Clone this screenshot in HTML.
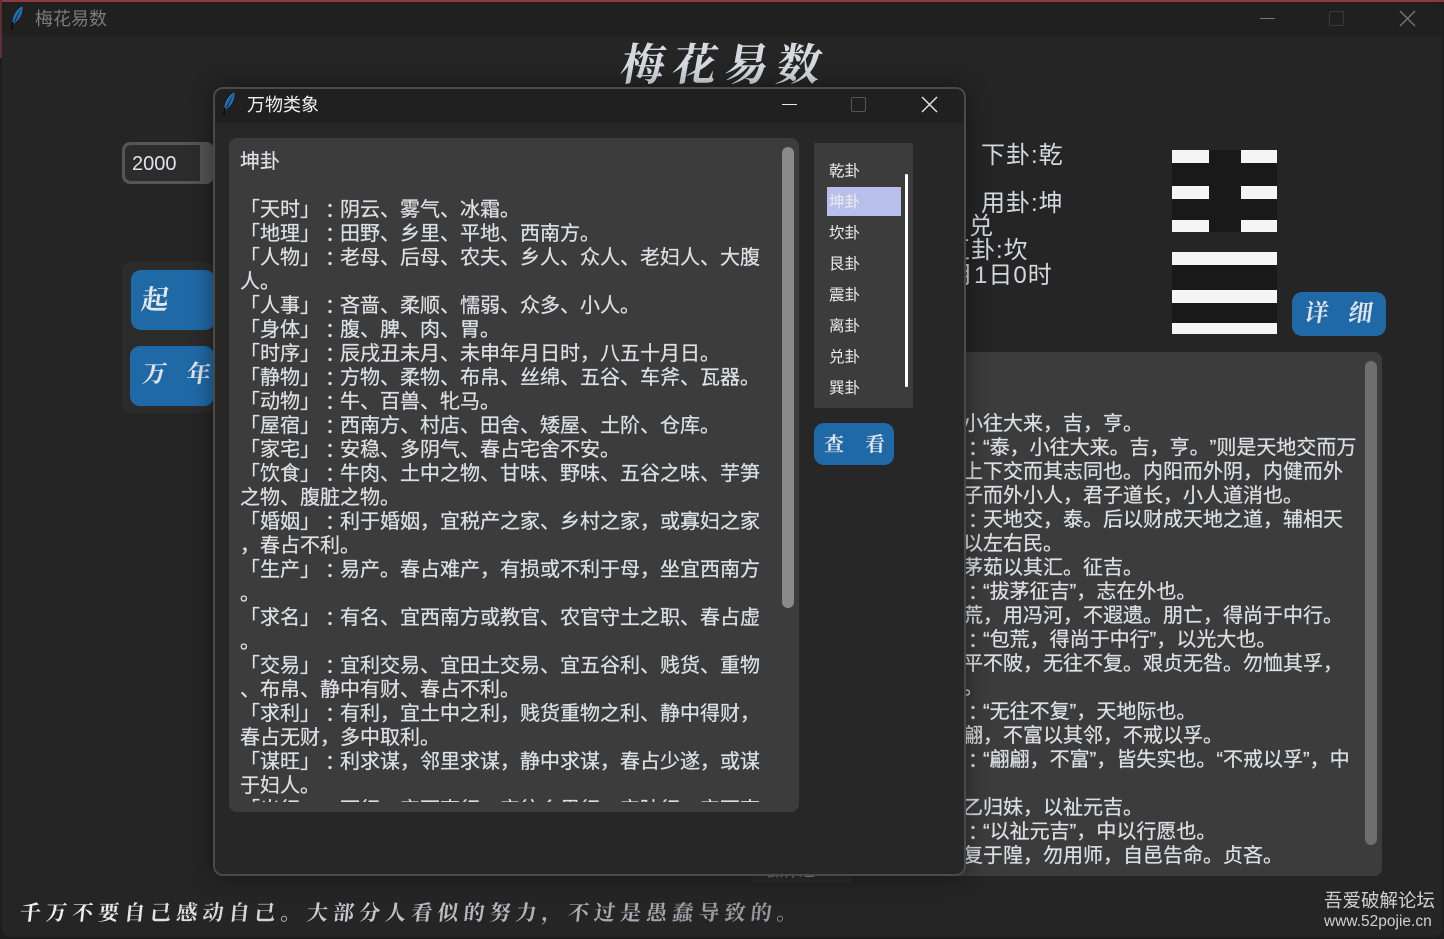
<!DOCTYPE html>
<html lang="zh-CN"><head><meta charset="utf-8"><title>梅花易数</title>
<style>
html,body{margin:0;padding:0;background:#1d1d1d;}
body{width:1444px;height:939px;overflow:hidden;position:relative;font-family:"Liberation Sans","Noto Sans CJK SC",sans-serif;text-spacing-trim:space-all;font-feature-settings:normal;}
div,pre,svg{position:absolute;box-sizing:border-box;margin:0;}
.t{font-family:"Liberation Sans","Noto Sans CJK SC",sans-serif;font-size:20px;line-height:24px;color:#dcdfe3;white-space:pre;text-spacing-trim:space-all;-webkit-text-stroke:.25px #dcdfe3;}
.t i{font-style:normal;font-family:"Noto Sans CJK JP",sans-serif;display:inline-block;width:20px;height:24px;line-height:24px;vertical-align:top;}
.cal{font-family:"Noto Serif CJK SC",serif;font-weight:700;white-space:nowrap;}
.btn{background:#1f69a7;border-radius:10px;}
.lab{font-size:24px;line-height:28px;letter-spacing:1px;color:#d5d9de;white-space:nowrap;font-family:"Liberation Sans","Noto Sans CJK SC",sans-serif;}
.bar{background:#f5f5f5;height:13px;}
.li{left:829px;font-size:15.5px;line-height:20px;color:#ececec;white-space:nowrap;}
</style></head><body>
<div style="left:0;top:0;width:1444px;height:939px;background:#1d1d1d"></div>
<div style="left:0;top:0;width:1444px;height:2px;background:#8a3a42"></div>
<div style="left:0;top:0;width:2px;height:58px;background:#5e3034"></div>
<div style="left:2px;top:2px;width:1440px;height:935px;background:#252525;border-radius:8px;overflow:hidden"></div>
<div style="left:2px;top:2px;width:1440px;height:35px;background:#202020;border-radius:8px 8px 0 0"></div>
<svg style="left:9px;top:5px" width="16" height="26" viewBox="0 0 16 26"><path d="M13 2C8 5 4 11 4 18L3 24M13 2C13 9 10 15 4 18" fill="#1f69b0" stroke="#2a7cc4" stroke-width="1"/><path d="M3 24L4 17" stroke="#0c0c0c" stroke-width="2"/></svg>
<div style="left:35px;top:6px;font-size:18px;line-height:26px;color:#7b7b7b">梅花易数</div>
<div style="left:1260px;top:18px;width:15px;height:1px;background:#777"></div>
<div style="left:1329px;top:11px;width:15px;height:15px;border:1px solid #3a3a3a;border-radius:2px"></div>
<svg style="left:1399px;top:10px" width="17" height="17" viewBox="0 0 17 17"><path d="M1 1L16 16M16 1L1 16" stroke="#777" stroke-width="1.3" fill="none"/></svg>

<div class="cal" style="left:622px;top:31px;font-size:44px;line-height:60px;letter-spacing:8px;color:#d5dae0;transform:skewX(-10deg)">梅花易数</div>

<div style="left:122px;top:142px;width:92px;height:42px;background:#555;border-radius:8px"></div>
<div style="left:125px;top:145px;width:75px;height:36px;background:#2c2c2c;border-radius:6px 0 0 6px"></div>
<div style="left:132px;top:151px;font-size:20px;line-height:26px;color:#dfe3e8">2000</div>

<div style="left:122px;top:262px;width:92px;height:151px;background:#2b2b2b;border-radius:8px"></div>
<div class="btn" style="left:131px;top:270px;width:84px;height:60px"></div>
<div class="btn" style="left:130px;top:346px;width:84px;height:60px"></div>
<div class="cal" style="left:142px;top:280px;font-size:27px;line-height:36px;color:#e4e8ec;transform:skewX(-8deg)">起</div>
<div class="cal" style="left:143px;top:355px;font-size:24px;line-height:34px;color:#e0e4e8;letter-spacing:20px;transform:skewX(-8deg)">万年</div>

<div class="lab" style="left:981px;top:142px">下卦:乾</div>
<div class="lab" style="left:981px;top:190px">用卦:坤</div>
<div class="lab" style="left:969px;top:213px">兑</div>
<div class="lab" style="left:946px;top:237px">互卦:坎</div>
<div class="lab" style="left:949px;top:262px">月1日0时</div>

<div style="left:1172px;top:150px;width:105px;height:82px;background:#191919"></div>
<div style="left:1172px;top:252px;width:105px;height:82px;background:#191919"></div>
<div class="bar" style="left:1172px;top:150px;width:37px"></div>
<div class="bar" style="left:1241px;top:150px;width:36px"></div>
<div class="bar" style="left:1172px;top:186px;width:37px"></div>
<div class="bar" style="left:1241px;top:186px;width:36px"></div>
<div class="bar" style="left:1172px;top:220px;width:37px;height:12px"></div>
<div class="bar" style="left:1241px;top:220px;width:36px;height:12px"></div>
<div class="bar" style="left:1172px;top:252px;width:105px"></div>
<div class="bar" style="left:1172px;top:290px;width:105px"></div>
<div class="bar" style="left:1172px;top:323px;width:105px;height:11px"></div>

<div class="btn" style="left:1292px;top:292px;width:94px;height:44px"></div>
<div class="cal" style="left:1305px;top:295px;font-size:24px;line-height:32px;color:#dfe4e9;letter-spacing:20px;transform:skewX(-8deg)">详细</div>

<div style="left:940px;top:352px;width:442px;height:524px;background:#3c3c3c;border-radius:8px;overflow:hidden"></div>
<div style="left:1365px;top:361px;width:12px;height:484px;background:#6e6e6e;border-radius:6px"></div>
<pre class="t" style="left:963px;top:412px">小往大来，吉，亨。
<i>：</i>“泰，小往大来。吉，亨。”则是天地交而万
上下交而其志同也。内阳而外阴，内健而外
子而外小人，君子道长，小人道消也。
<i>：</i>天地交，泰。后以财成天地之道，辅相天
以左右民。
茅茹以其汇。征吉。
<i>：</i>“拔茅征吉”，志在外也。
荒，用冯河，不遐遗。朋亡，得尚于中行。
<i>：</i>“包荒，得尚于中行”，以光大也。
平不陂，无往不复。艰贞无咎。勿恤其孚，
。
<i>：</i>“无往不复”，天地际也。
翩，不富以其邻，不戒以孚。
<i>：</i>“翩翩，不富”，皆失实也。“不戒以孚”，中

乙归妹，以祉元吉。
<i>：</i>“以祉元吉”，中以行愿也。
复于隍，勿用师，自邑告命。贞吝。</pre>

<div style="left:752px;top:870px;width:99px;height:13px;background:#2b2b2b"></div>
<div style="left:767px;top:864px;font-size:16px;line-height:16px;color:#8a8a8a">操作速</div>

<!-- dialog -->
<div style="left:213px;top:87px;width:753px;height:789px;background:#272727;border:2px solid #4a4a4a;border-radius:10px;box-shadow:0 0 24px rgba(0,0,0,.45)"></div>
<div style="left:215px;top:89px;width:749px;height:34px;background:#202020;border-radius:8px 8px 0 0"></div>
<svg style="left:221px;top:91px" width="16" height="26" viewBox="0 0 16 26"><path d="M13 2C8 5 4 11 4 18L3 24M13 2C13 9 10 15 4 18" fill="#1f69b0" stroke="#2a7cc4" stroke-width="1"/><path d="M3 24L4 17" stroke="#0c0c0c" stroke-width="2"/></svg>
<div style="left:247px;top:92px;font-size:18px;line-height:26px;color:#f0f0f0">万物类象</div>
<div style="left:782px;top:104px;width:15px;height:1px;background:#e8e8e8"></div>
<div style="left:851px;top:97px;width:15px;height:15px;border:1px solid #555;border-radius:2px"></div>
<svg style="left:921px;top:96px" width="17" height="17" viewBox="0 0 17 17"><path d="M1 1L16 16M16 1L1 16" stroke="#eee" stroke-width="1.3" fill="none"/></svg>

<div style="left:229px;top:138px;width:570px;height:674px;background:#3c3c3c;border-radius:8px"></div>
<div style="left:229px;top:138px;width:553px;height:664px;overflow:hidden">
<pre class="t" style="left:11px;top:12px">坤卦

「天时」<i>：</i>阴云、雾气、冰霜。
「地理」<i>：</i>田野、乡里、平地、西南方。
「人物」<i>：</i>老母、后母、农夫、乡人、众人、老妇人、大腹
人。
「人事」<i>：</i>吝啬、柔顺、懦弱、众多、小人。
「身体」<i>：</i>腹、脾、肉、胃。
「时序」<i>：</i>辰戌丑未月、未申年月日时，八五十月日。
「静物」<i>：</i>方物、柔物、布帛、丝绵、五谷、车斧、瓦器。
「动物」<i>：</i>牛、百兽、牝马。
「屋宿」<i>：</i>西南方、村店、田舍、矮屋、土阶、仓库。
「家宅」<i>：</i>安稳、多阴气、春占宅舍不安。
「饮食」<i>：</i>牛肉、土中之物、甘味、野味、五谷之味、芋笋
之物、腹脏之物。
「婚姻」<i>：</i>利于婚姻，宜税产之家、乡村之家，或寡妇之家
，春占不利。
「生产」<i>：</i>易产。春占难产，有损或不利于母，坐宜西南方
。
「求名」<i>：</i>有名、宜西南方或教官、农官守土之职、春占虚
。
「交易」<i>：</i>宜利交易、宜田土交易、宜五谷利、贱货、重物
、布帛、静中有财、春占不利。
「求利」<i>：</i>有利，宜土中之利，贱货重物之利、静中得财，
春占无财，多中取利。
「谋旺」<i>：</i>利求谋，邻里求谋，静中求谋，春占少遂，或谋
于妇人。
「出行」<i>：</i>可行，宜西南行、宜往乡里行、宜陆行、宜西南</pre>
</div>
<div style="left:782px;top:147px;width:12px;height:461px;background:#8a8a8a;border-radius:6px"></div>

<div style="left:814px;top:143px;width:99px;height:265px;background:#3c3c3c"></div>
<div style="left:827px;top:187px;width:74px;height:29px;background:#b8bfea"></div>
<div style="left:905px;top:174px;width:3px;height:213px;background:#fff;border-radius:1px"></div>
<div class="li" style="top:162px">乾卦</div>
<div class="li" style="top:193px">坤卦</div>
<div class="li" style="top:224px">坎卦</div>
<div class="li" style="top:255px">艮卦</div>
<div class="li" style="top:286px">震卦</div>
<div class="li" style="top:317px">离卦</div>
<div class="li" style="top:348px">兑卦</div>
<div class="li" style="top:379px">巽卦</div>

<div class="btn" style="left:814px;top:423px;width:80px;height:42px"></div>
<div class="cal" style="left:824px;top:429px;font-size:20px;line-height:28px;color:#e0e4e8;letter-spacing:21px">查看</div>

<div class="cal" style="left:20px;top:897px;font-size:21px;line-height:30px;letter-spacing:5.1px;background:linear-gradient(90deg,#f2f5f8 0,#c8ccd0 300px,#8f9296 790px);-webkit-background-clip:text;background-clip:text;color:transparent;transform:skewX(-6deg)">千万不要自己感动自己。大部分人看似的努力，不过是愚蠢导致的。</div>

<div style="left:1324px;top:889px;font-size:18.5px;line-height:24px;color:#d0d0d0;white-space:nowrap">吾爱破解论坛</div>
<div style="left:1324px;top:913px;font-size:15.5px;line-height:18px;color:#d0d0d0;white-space:nowrap">www.52pojie.cn</div>
</body></html>
